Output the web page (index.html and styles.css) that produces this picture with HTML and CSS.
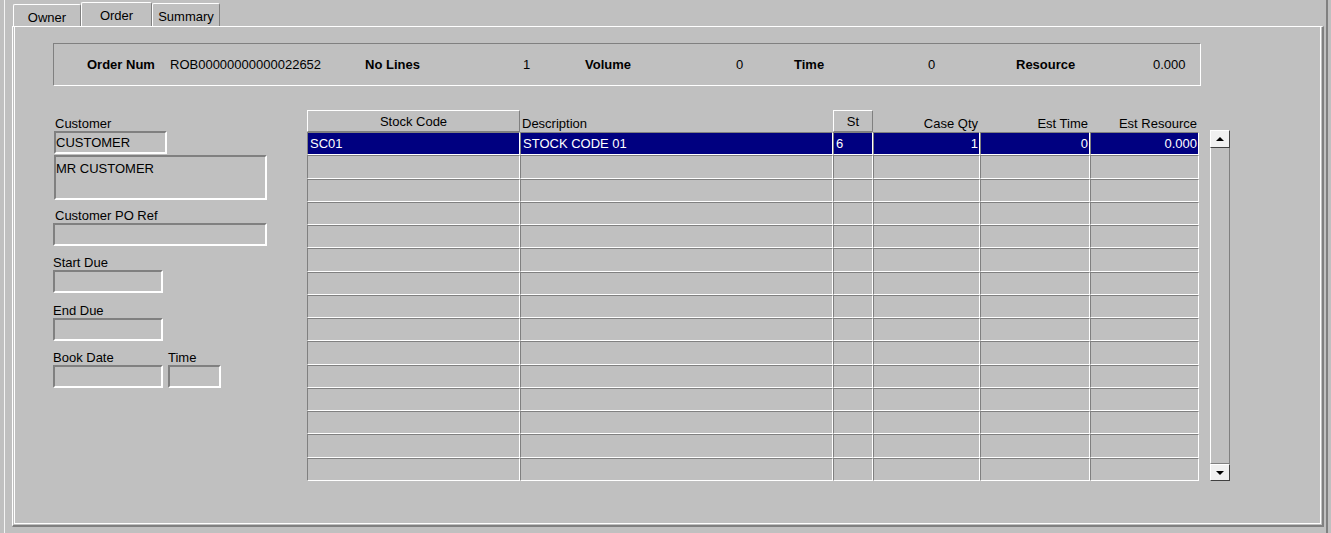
FILE: index.html
```html
<!DOCTYPE html>
<html lang="en">
<head>
  <meta charset="UTF-8">
  <title>Order</title>
  <link rel="stylesheet" href="styles.css">
</head>
<body>

<div class="app">
  <div class="tabs">
    <div class="tab">Owner</div>
    <div class="tab active">Order</div>
    <div class="tab tab-last">Summary</div>
  </div>

  <div class="panel">
    <div class="panel-inner">

      <div class="order-head">
        <b>Order Num</b>
        <span>ROB00000000000022652</span>
        <b>No Lines</b>
        <span>1</span>
        <b>Volume</b>
        <span>0</span>
        <b>Time</b>
        <span>0</span>
        <b>Resource</b>
        <span>0.000</span>
      </div>

      <div class="main">
        <!-- customer / dates -->
        <div class="form">
          <div class="lbl lbl-cust">Customer</div>
          <div class="field fld-cust">CUSTOMER</div>
          <div class="field fld-name">MR CUSTOMER</div>

          <div class="lbl lbl-po">Customer PO Ref</div>
          <div class="field fld-po"></div>

          <div class="lbl lbl-start">Start Due</div>
          <div class="field fld-date"></div>

          <div class="lbl lbl-end">End Due</div>
          <div class="field fld-date"></div>

          <div class="book-row">
            <div>
              <div class="lbl">Book Date</div>
              <div class="field fld-date"></div>
            </div>
            <div class="book-time">
              <div class="lbl">Time</div>
              <div class="field fld-time"></div>
            </div>
          </div>
        </div>

        <!-- order lines -->
        <div class="grid" id="grille">
          <div class="hbtn">Stock Code</div>
          <div class="hplain">Description</div>
          <div class="hbtn">St</div>
          <div class="hplain right">Case Qty</div>
          <div class="hplain right">Est Time</div>
          <div class="hplain right">Est Resource</div>

          <div class="cell sel">SC01</div>
          <div class="cell sel">STOCK CODE 01</div>
          <div class="cell sel">6</div>
          <div class="cell sel num">1</div>
          <div class="cell sel num">0</div>
          <div class="cell sel num">0.000</div>
        </div>

        <div class="vscroll">
          <div class="sb-btn sb-up"><span class="arrow-up"></span></div>
          <div class="sb-track"></div>
          <div class="sb-btn sb-down"><span class="arrow-down"></span></div>
        </div>
      </div>

    </div>
  </div>
</div>

<script>
  // empty lines of the grid
  const grille = document.getElementById("grille");
  for (let i = 0; i < 14; i++) {
    grille.insertAdjacentHTML("beforeend", `
      <div class="cell"></div>
      <div class="cell"></div>
      <div class="cell"></div>
      <div class="cell num"></div>
      <div class="cell num"></div>
      <div class="cell num"></div>
    `);
  }
</script>

</body>
</html>
```

FILE: styles.css
```css
body {
  margin: 0;
  background-color: #c0c0c0;
  font-family: "Liberation Sans", Arial, sans-serif;
  font-size: 13px;
  color: #000;
}

.app {
  margin-left: 4px;
  width: 1324px;
  height: 533px;
  box-sizing: border-box;
  border-left: 1px solid #f4f4f4;
  border-right: 2px solid #808080;
}

/* tabs */
.tabs {
  display: flex;
  align-items: flex-end;
  height: 26px;
  box-sizing: border-box;
  padding-top: 2px;
  margin-left: 8px;
}

.tab {
  box-sizing: border-box;
  width: 68px;
  height: 22px;
  border-top: 1px solid #fff;
  border-left: 1px solid #fff;
  border-right: 1px solid #808080;
  border-radius: 2px 2px 0 0;
  padding-top: 5px;
  line-height: 15px;
  text-align: center;
}

.tab.active {
  width: 71px;
  height: 24px;
}

.tab-last {
  height: 23px;
}

/* main panel */
.panel {
  margin-left: 7px;
  width: 1312px;
  height: 501px;
  box-sizing: border-box;
  border-top: 1px solid #fff;
  border-left: 1px solid #fff;
  border-right: 2px solid #808080;
  border-bottom: 2px solid #808080;
}

.panel-inner {
  margin: 0 1px 1px 1px;
  height: calc(100% - 1px);
  box-sizing: border-box;
  border-left: 1px solid #fff;
  border-right: 1px solid #fff;
  border-bottom: 1px solid #fff;
  padding: 16px 0 0 38px;
}

.order-head {
  width: 1148px;
  height: 43px;
  box-sizing: border-box;
  border: 1px solid;
  border-color: #808080 #fff #fff #808080;
  padding-left: 33px;
  display: grid;
  grid-template-columns: 83px 195px 158px 62px 151px 58px 134px 88px 137px auto;
  align-items: center;
}

.main {
  display: flex;
  margin-top: 24px;
}

/* left form */
.form {
  width: 254px;
}

.lbl {
  line-height: 15px;
}

.field {
  box-sizing: border-box;
  height: 23px;
  border: 2px solid;
  border-color: #808080 #fff #fff #808080;
  padding: 0;
  line-height: 19px;
}

.lbl-cust {
  margin-top: 6px;
  padding-left: 2px;
}

.fld-cust {
  margin-left: 1px;
  width: 113px;
}

.fld-name {
  margin: 1px 0 0 1px;
  width: 213px;
  height: 45px;
  padding-top: 4px;
  line-height: 15px;
}

.lbl-po {
  margin-top: 8px;
  padding-left: 2px;
}

.fld-po {
  width: 214px;
}

.lbl-start {
  margin-top: 9px;
}

.lbl-end {
  margin-top: 10px;
}

.fld-date {
  width: 110px;
}

.book-row {
  display: flex;
  margin-top: 9px;
}

.book-time {
  margin-left: 5px;
}

.fld-time {
  width: 53px;
}

/* lines grid */
.grid {
  display: grid;
  width: 892px;
  height: 371px;
  grid-template-columns: 213px 313px 40px 107px 110px 109px;
  grid-template-rows: 22px repeat(15, 1fr);
}

.hbtn {
  box-sizing: border-box;
  border: 1px solid;
  border-color: #fff #808080 #808080 #fff;
  padding-top: 1px;
  line-height: 19px;
  text-align: center;
}

.hplain {
  align-self: end;
  line-height: 15px;
  padding: 0 2px 1px;
}

.right {
  text-align: right;
}

.cell {
  box-sizing: border-box;
  border: 1px solid;
  border-color: #808080 #fff #fff #808080;
  padding: 0 2px;
  display: flex;
  align-items: center;
  white-space: nowrap;
  overflow: hidden;
}

.cell.num {
  justify-content: flex-end;
  padding-right: 1px;
}

.cell.sel {
  background-color: #000080;
  color: #fff;
}

/* scrollbar */
.vscroll {
  margin-left: 11px;
  margin-top: 20px;
  width: 20px;
  height: 351px;
  display: flex;
  flex-direction: column;
}

.sb-btn {
  box-sizing: border-box;
  background-color: #f0f0f0;
  border: 1px solid;
  border-color: #fff #404040 #404040 #fff;
  display: flex;
  align-items: center;
  justify-content: center;
}

.sb-up {
  height: 18px;
}

.sb-down {
  height: 17px;
}

.sb-track {
  flex: 1;
  border-left: 1px solid #fff;
  border-right: 1px solid #808080;
  border-bottom: 1px solid #808080;
}

.arrow-up {
  width: 0;
  height: 0;
  border-left: 4px solid transparent;
  border-right: 4px solid transparent;
  border-bottom: 4px solid #000;
}

.arrow-down {
  width: 0;
  height: 0;
  border-left: 4px solid transparent;
  border-right: 4px solid transparent;
  border-top: 4px solid #000;
}
```
